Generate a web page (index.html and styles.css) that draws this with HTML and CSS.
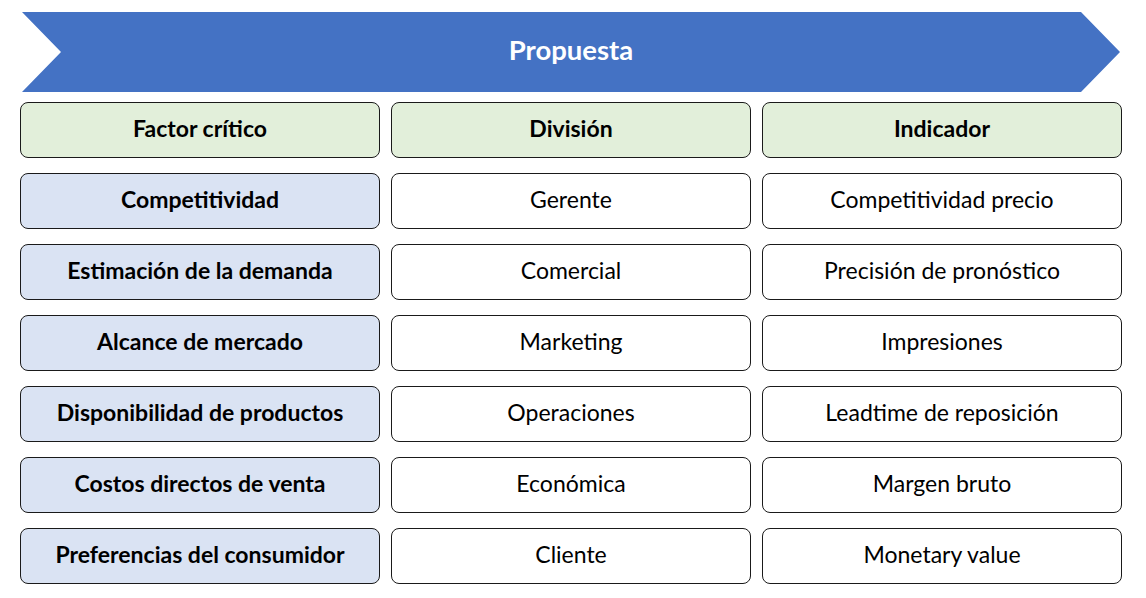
FILE: index.html
```html
<!DOCTYPE html>
<html lang="es">
<head>
<meta charset="utf-8">
<title>Propuesta</title>
<link rel="stylesheet" href="styles.css">
</head>
<body>
<div class="page">
  <div class="banner"><span class="banner-title">Propuesta</span></div>
  <div class="table">
    <div class="cell head">Factor crítico</div>
    <div class="cell head">División</div>
    <div class="cell head">Indicador</div>

    <div class="cell factor">Competitividad</div>
    <div class="cell plain">Gerente</div>
    <div class="cell plain">Competitividad precio</div>

    <div class="cell factor">Estimación de la demanda</div>
    <div class="cell plain">Comercial</div>
    <div class="cell plain">Precisión de pronóstico</div>

    <div class="cell factor">Alcance de mercado</div>
    <div class="cell plain">Marketing</div>
    <div class="cell plain">Impresiones</div>

    <div class="cell factor">Disponibilidad de productos</div>
    <div class="cell plain">Operaciones</div>
    <div class="cell plain">Leadtime de reposición</div>

    <div class="cell factor">Costos directos de venta</div>
    <div class="cell plain">Económica</div>
    <div class="cell plain">Margen bruto</div>

    <div class="cell factor">Preferencias del consumidor</div>
    <div class="cell plain">Cliente</div>
    <div class="cell plain">Monetary value</div>
  </div>
</div>
</body>
</html>
```

FILE: styles.css
```css
* { box-sizing: border-box; }
html, body { margin: 0; padding: 0; background: #ffffff; }
body {
  width: 1146px;
  height: 598px;
  overflow: hidden;
  font-family: Lato, "Open Sans", "Liberation Sans", sans-serif;
  color: #000;
}
.page {
  padding: 12px 0 0 20px;
  display: flex;
  flex-direction: column;
}
.banner {
  margin-left: 2px;
  width: 1098px;
  height: 80px;
  background: #4472c4;
  clip-path: polygon(0 0, 1059px 0, 1098px 40px, 1059px 80px, 0 80px, 39px 40px);
  display: flex;
  align-items: center;
  justify-content: center;
}
.banner-title {
  color: #fff;
  font-weight: 700;
  font-size: 27.5px;
  margin-top: -6px;
}
.table {
  margin-top: 9.5px;
  display: grid;
  grid-template-columns: repeat(3, 360px);
  grid-auto-rows: 56px;
  column-gap: 11px;
  row-gap: 15.1px;
}
.cell {
  border: 1px solid #1a1a1a;
  border-radius: 8px;
  display: flex;
  align-items: center;
  justify-content: center;
  font-size: 23px;
  padding-bottom: 4px;
}
.head { background: #e2efda; font-weight: 700; }
.factor { background: #dae3f3; font-weight: 700; }
.plain { background: #ffffff; }
```
